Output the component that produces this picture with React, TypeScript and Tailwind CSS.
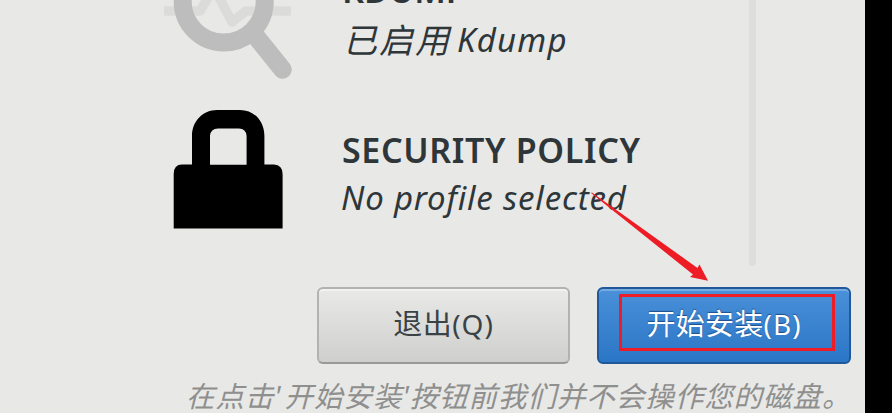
import type { ReactNode } from "react";

function KdumpIcon() {
  return (
    <svg viewBox="160 -52 136 134" className="block h-[134px] w-[136px]" fill="none">
      <path d="M164 11H200L214 -12L232 22L246 11H291" stroke="#dbdbd9" strokeWidth="9.5" strokeLinejoin="round" />
      <circle cx="223.7" cy="1.5" r="41" stroke="#bdbdbd" strokeWidth="18" />
      <path d="M254 34L282.5 69.5" stroke="#bdbdbd" strokeWidth="18.5" strokeLinecap="round" />
    </svg>
  );
}

function LockIcon() {
  return (
    <svg viewBox="160 104 136 130" className="block h-[130px] w-[136px]">
      <path
        fillRule="evenodd"
        d="M173.7 228.4V174Q173.7 164.5 182 164.5H192V136C192 121 203 110 217 110H240C254 110 264.4 121 264.4 136V164.5H274Q282.6 165 282.6 174V228.4ZM210 164.8H246.6V136Q246 128.5 239 128.5H218Q210.5 128.5 210 136Z"
      />
    </svg>
  );
}

interface SpokeProps {
  icon: ReactNode;
  children: ReactNode;
  className: string;
}

function Spoke({ icon, children, className }: SpokeProps) {
  return (
    <div className={`flex pl-[160px] ${className}`}>
      <div className="w-[182px] shrink-0">{icon}</div>
      <div className="whitespace-nowrap text-[#2e3639]">{children}</div>
    </div>
  );
}

function Annotation() {
  return (
    <svg viewBox="0 0 892 413" className="pointer-events-none absolute inset-0 h-[413px] w-[892px]">
      <path d="M591 193L592 192.5L697.5 268L699.5 264.5L708 280.8L690 277L693 274.5Z" fill="#ee1c25" />
      <rect x="620.5" y="295.5" width="213" height="54" fill="none" stroke="#ee1c25" strokeWidth="3" />
    </svg>
  );
}

export default function App() {
  return (
    <div className="relative flex h-[413px] w-[892px] overflow-hidden bg-black font-['Noto_Sans','Noto_Sans_CJK_SC',sans-serif]">
      <main className="flex h-full w-[865px] flex-col bg-[#e8e8e6]">
        <div className="flex h-[287px] shrink-0">
          <div className="w-[749px] shrink-0">
            <Spoke icon={<KdumpIcon />} className="-mt-[52px] h-[156px]">
              <h2 className="mt-[22px] h-10 text-[34px] leading-10 font-semibold">KDUMP</h2>
              <p className="mt-[10px] flex pl-px text-[33px] leading-[40px] italic">
                <span className="text-[34px] tracking-[2px]">已启用</span>
                <span className="ml-1.5 tracking-[1.2px]">Kdump</span>
              </p>
            </Spoke>
            <Spoke icon={<LockIcon />} className="h-[130px]">
              <h2 className="mt-[26px] text-[34px] leading-10 font-semibold tracking-[0.65px]">SECURITY POLICY</h2>
              <p className="mt-2 -ml-px text-[33px] leading-10 tracking-[0.8px] italic">No profile selected</p>
            </Spoke>
          </div>
          <div className="h-[266px] w-[7px] rounded-b-sm bg-[#dededc]" />
        </div>
        <div className="flex gap-[27px] pl-[317px] text-[28px]">
          <button className="flex h-[77px] w-[253px] items-center justify-center rounded-md border-2 border-[#b2b2b0] border-b-[#999997] bg-linear-to-b from-[#e9e9e8] to-[#cfcfce] pb-[3px] text-[#3a4245] shadow-[inset_0_2px_0_#f2f2f1]">
            <span className="text-[29px] tracking-[0.5px]">退出</span>
            <span className="tracking-[1px]">(Q)</span>
          </button>
          <button className="flex h-[77px] w-[254px] items-center justify-center rounded-md border-2 border-[#20589a] bg-linear-to-b from-[#4a90d9] to-[#2a76c6] pb-[3px] text-white shadow-[inset_0_2px_0_#77ace3] [text-shadow:0_-1px_1px_#1c508c]">
            <span className="text-[29px] tracking-[0.3px]">开始安装</span>
            <span className="tracking-[1px]">(B)</span>
          </button>
        </div>
        <p className="mt-[11px] pl-[186px] text-[28.5px] leading-[42px] tracking-[0.95px] whitespace-nowrap text-[#8e8f8e] italic">
          在点击<span className="mr-[3px]">'</span>开始安装<span>'</span>按钮前我们并不会操作您的磁盘。
        </p>
      </main>
      <Annotation />
    </div>
  );
}
